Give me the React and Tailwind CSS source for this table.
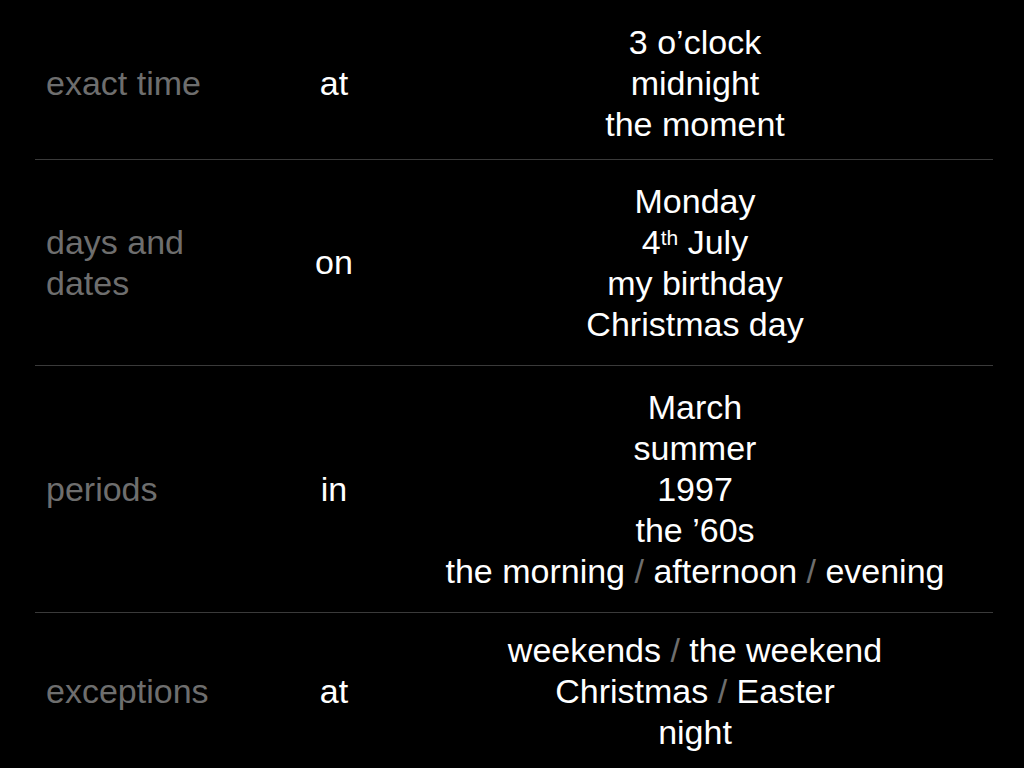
import React from "react";

const Slash = () => <span className="text-[#6e6e6e]"> / </span>;

const rows = [
  {
    h: "h-[160px] pt-[7px]",
    label: "exact time",
    prep: "at",
    items: [<>3 o’clock</>, <>midnight</>, <>the moment</>],
  },
  {
    h: "h-[206px]",
    label: "days and dates",
    prep: "on",
    items: [
      <>Monday</>,
      <>
        4<span className="text-[21px] leading-none align-baseline relative -top-[9px]">th</span> July
      </>,
      <>my birthday</>,
      <>Christmas day</>,
    ],
  },
  {
    h: "h-[247px]",
    label: "periods",
    prep: "in",
    items: [
      <>March</>,
      <>summer</>,
      <>1997</>,
      <>the ’60s</>,
      <>
        the morning<Slash />afternoon<Slash />evening
      </>,
    ],
  },
  {
    h: "h-[155px] pt-[2px]",
    label: "exceptions",
    prep: "at",
    items: [
      <>
        weekends<Slash />the weekend
      </>,
      <>
        Christmas<Slash />Easter
      </>,
      <>night</>,
    ],
  },
];

export default function App() {
  return (
    <div
      className="w-[1024px] h-[768px] bg-black overflow-hidden pl-[35px] pr-[31px] text-[34px] leading-[41px] text-white"
      style={{ fontFamily: '"Liberation Sans", Arial, sans-serif' }}
    >
      {rows.map((r, i) => (
        <div
          key={i}
          className={`flex items-center ${r.h} ${
            i < rows.length - 1 ? "border-b border-[#3a3a3a]" : ""
          }`}
        >
          <div className="w-[236px] pl-[11px] pr-[11px] text-[#6e6e6e]">{r.label}</div>
          <div className="w-[126px] text-center">{r.prep}</div>
          <div className="w-[596px] flex flex-col items-center text-center whitespace-nowrap">
            {r.items.map((it, j) => (
              <div key={j}>{it}</div>
            ))}
          </div>
        </div>
      ))}
    </div>
  );
}
